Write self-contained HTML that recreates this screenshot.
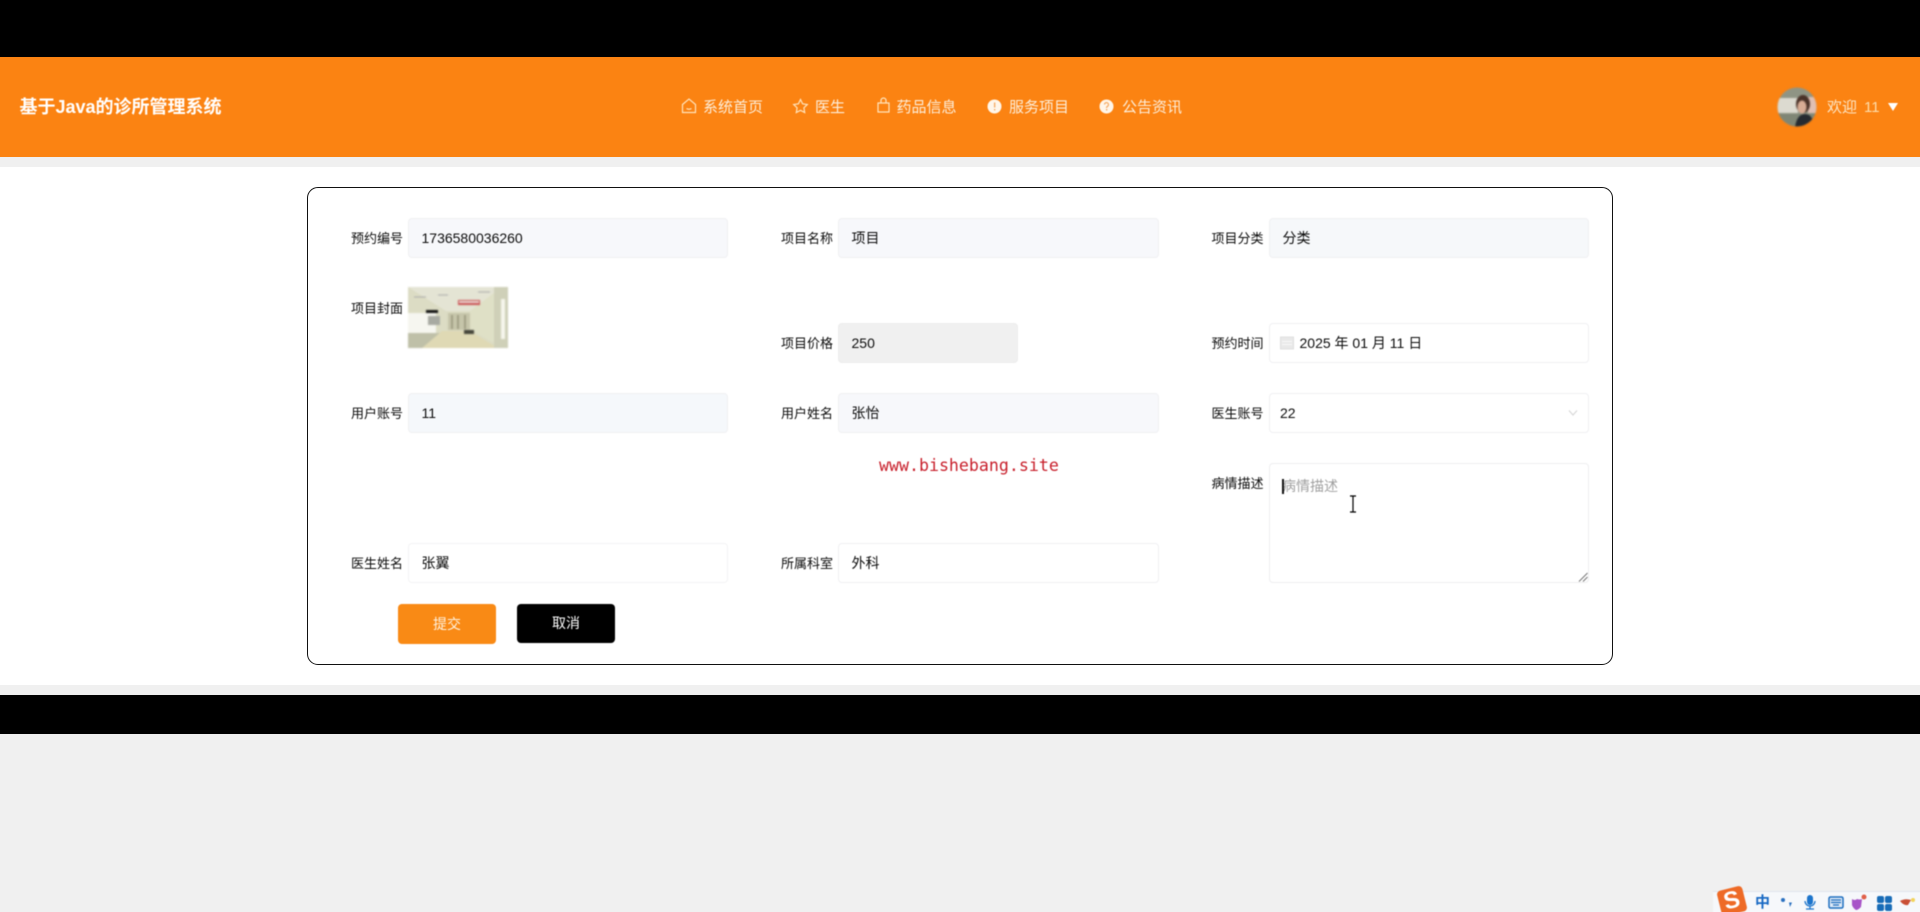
<!DOCTYPE html>
<html lang="zh"><head><meta charset="utf-8"><title>基于Java的诊所管理系统</title>
<style>
*{box-sizing:border-box}
html,body{margin:0;padding:0;width:1920px;height:912px;overflow:hidden;background:#f0f0f0}
body{position:relative;font-family:"Liberation Sans","Noto Sans CJK SC",sans-serif;color:#111}
.a{position:absolute}
#wrap{position:absolute;left:0;top:0;width:1920px;height:912px;filter:blur(.4px)}
.nav{position:absolute;top:97px;height:22px;line-height:22px;font-size:15px;color:#fdeeda;white-space:nowrap}
.lb{position:absolute;width:60px;text-align:right;font-size:13px;height:20px;line-height:20px;color:#0c0c0c;white-space:nowrap;margin-top:1px}
.in{position:absolute;width:320px;height:40px;line-height:39px;border:1px solid #f0f0f2;border-radius:4px;font-size:14px;padding-left:12.500px;color:#0c0c0c;background:#fff;white-space:nowrap}
.g{background:#f7f8fb}
</style></head><body>
<div class="a" style="left:0;top:0;width:1920px;height:57px;background:#000"></div>
<div class="a" style="left:0;top:57px;width:1920px;height:100px;background:#fb8312"></div>
<div class="a" style="left:0;top:167px;width:1920px;height:518px;background:#fff"></div>
<div class="a" style="left:0;top:695px;width:1920px;height:39px;background:#000"></div>
<div class="a" style="left:307px;top:187px;width:1306px;height:478px;border:1.500px solid #111;border-radius:11px;background:#fff"></div>
<div id="wrap">

<div class="a" style="left:19.500px;top:94px;height:26px;line-height:26px;font-size:18px;font-weight:700;color:#fff;white-space:nowrap">基于Java的诊所管理系统</div>

<svg class="a" style="left:680px;top:97px" width="18" height="18" viewBox="0 0 18 18" fill="none" stroke="#ffe4bd" stroke-width="1.200"><path d="M2.500 7.500 9 2l6.500 5.500V15.500H2.500Z"/><path d="M6.500 11.500q2.500 1.500 5 0" /></svg>
<div class="nav" style="left:703px">系统首页</div>
<svg class="a" style="left:792px;top:98px" width="17" height="16" viewBox="0 0 17 16" fill="none" stroke="#ffe4bd" stroke-width="1.200"><path d="M8.500 1.500l2.100 4.300 4.700.7-3.400 3.300.8 4.700-4.200-2.200-4.200 2.200.8-4.700L1.700 6.500l4.700-.7z"/></svg>
<div class="nav" style="left:815px">医生</div>
<svg class="a" style="left:876px;top:97px" width="15" height="17" viewBox="0 0 15 17" fill="none" stroke="#ffe4bd" stroke-width="1.200"><path d="M2 6h11v9H2z"/><path d="M5 6V3.500a2.500 2.500 0 0 1 5 0V6"/></svg>
<div class="nav" style="left:896.500px">药品信息</div>
<svg class="a" style="left:987px;top:99px" width="15" height="15" viewBox="0 0 15 15"><circle cx="7.500" cy="7.500" r="7" fill="#fff6ea"/><rect x="7" y="3.500" width="1.300" height="5" fill="#f4a860"/><rect x="7" y="10" width="1.300" height="1.500" fill="#f4a860"/></svg>
<div class="nav" style="left:1009px">服务项目</div>
<svg class="a" style="left:1099px;top:99px" width="15" height="15" viewBox="0 0 15 15"><circle cx="7.500" cy="7.500" r="7" fill="#fff6ea"/><path d="M5.500 5.500a2 2 0 1 1 3 1.800c-.7.400-1 .8-1 1.700" fill="none" stroke="#f4a860" stroke-width="1.200"/><rect x="7" y="10" width="1.300" height="1.500" fill="#f4a860"/></svg>
<div class="nav" style="left:1122px">公告资讯</div>

<svg class="a" style="left:1777px;top:87px;filter:blur(.7px)" width="40" height="40" viewBox="0 0 40 40"><defs><clipPath id="c"><circle cx="20" cy="20" r="19.500"/></clipPath></defs><g clip-path="url(#c)"><rect width="40" height="40" fill="#8f9484"/><rect x="0" y="11" width="21" height="15" fill="#dcdad0"/><rect y="27" width="40" height="13" fill="#7f8675"/><rect x="31" y="10" width="9" height="16" fill="#e0bfb2"/><ellipse cx="26" cy="17" rx="7" ry="9" fill="#4a3228"/><ellipse cx="25" cy="20" rx="4.500" ry="6.500" fill="#d8ac94"/><path d="M18 40q2-13 10-13 8 0 9 13z" fill="#252a30"/></g></svg>
<div class="nav" style="left:1827px;color:#fde6c6">欢迎</div>
<div class="nav" style="left:1864px;color:#fddcaa">11</div>
<svg class="a" style="left:1888px;top:103px" width="10" height="8" viewBox="0 0 10 8"><path d="M0 0h10L5 8z" fill="#fff"/></svg>

<div class="lb" style="left:343px;top:228px">预约编号</div>
<div class="in g" style="left:408px;top:218px">1736580036260</div>
<div class="lb" style="left:773px;top:228px">项目名称</div>
<div class="in g" style="left:838px;top:218px;width:321px">项目</div>
<div class="lb" style="left:1203.500px;top:228px">项目分类</div>
<div class="in" style="left:1269px;top:218px;background:#f6f8fa">分类</div>

<div class="lb" style="left:343px;top:298px">项目封面</div>
<svg class="a" style="left:408px;top:287px;filter:blur(.9px)" width="100" height="61" viewBox="0 0 100 61"><rect width="100" height="61" fill="#dcdcc4"/><path d="M0 0h100L62 24H38z" fill="#e4e4d4"/><path d="M0 26h28v20H0z" fill="#f6f6f0"/><path d="M0 46h34L16 61H0z" fill="#bfc0a8"/><path d="M34 44h28l28 17H14z" fill="#dfd9b4"/><path d="M62 24 86 6V56L62 42z" fill="#dfe0c6"/><path d="M86 0h14v61H86z" fill="#cfd0b8"/><rect x="93" y="12" width="4" height="40" fill="#f6f6ec"/><path d="M40 26h22v17H40z" fill="#c6c5aa"/><path d="M44 28v14M50 28v14M57 28v14" stroke="#8d8c72" stroke-width="1.300"/><rect x="50" y="13" width="22" height="5" fill="#c94e50"/><rect x="51" y="14" width="20" height="2" fill="#ead8d4"/><rect x="18" y="23" width="12" height="3" fill="#111"/><rect x="20" y="29" width="12" height="9" fill="#a8aaa2"/><rect x="56" y="43" width="10" height="4" fill="#45453a"/><path d="M6 10h12M30 8h10M70 5h12" stroke="#aaa" stroke-width="1"/></svg>
<div class="lb" style="left:773px;top:333px">项目价格</div>
<div class="in" style="left:838px;top:323px;width:180px;background:#f0f0f0;border-color:#ececec">250</div>
<div class="lb" style="left:1203.500px;top:333px">预约时间</div>
<div class="in" style="left:1269px;top:323px;padding-left:29.500px">2025 年 01 月 11 日</div>
<svg class="a" style="left:1280px;top:336px" width="14" height="14" viewBox="0 0 14 14"><rect x=".5" y="1" width="13" height="12" fill="#e9e9e9" stroke="#e0e0e0"/><rect x="2" y="5" width="10" height="1" fill="#f8f8f8"/><rect x="2" y="8" width="10" height="1" fill="#f8f8f8"/></svg>

<div class="lb" style="left:343px;top:403px">用户账号</div>
<div class="in" style="left:408px;top:393px;background:#f5f8fb">11</div>
<div class="lb" style="left:773px;top:403px">用户姓名</div>
<div class="in g" style="left:838px;top:393px;width:321px">张怡</div>
<div class="lb" style="left:1203.500px;top:403px">医生账号</div>
<div class="in" style="left:1269px;top:393px;padding-left:10px">22</div>
<svg class="a" style="left:1568px;top:409px" width="10" height="8" viewBox="0 0 10 8" fill="none" stroke="#d8d8d8" stroke-width="1.200"><path d="M1 1.500 5 6l4-4.500"/></svg>

<div class="a" style="left:879px;top:455px;height:22px;line-height:22px;font-family:'DejaVu Sans Mono','Liberation Mono',monospace;font-size:16.600px;color:#c8202c;white-space:nowrap">www.bishebang.site</div>

<div class="lb" style="left:1203.500px;top:473px">病情描述</div>
<div class="a" style="left:1269px;top:463px;width:320px;height:120px;border:1px solid #eeeef0;border-radius:4px;background:#fff"></div>
<div class="a" style="left:1282px;top:476px;height:20px;line-height:20px;font-size:14px;color:#a0a0a0;white-space:nowrap">病情描述</div>
<div class="a" style="left:1282px;top:479px;width:1.500px;height:15px;background:#111"></div>
<svg class="a" style="left:1348px;top:495px" width="10" height="18" viewBox="0 0 10 18" fill="none" stroke="#000" stroke-width="1.200"><path d="M2 1h6M5 1v16M2 17h6"/></svg>
<svg class="a" style="left:1578px;top:572px" width="10" height="10" viewBox="0 0 10 10" fill="none" stroke="#777" stroke-width="1"><path d="M1 9.500 9.500 1M5 9.500 9.500 5"/></svg>

<div class="lb" style="left:343px;top:553px">医生姓名</div>
<div class="in" style="left:408px;top:543px;border-color:#f3f3f5">张翼</div>
<div class="lb" style="left:773px;top:553px">所属科室</div>
<div class="in" style="left:838px;top:543px;width:321px">外科</div>

<div class="a" style="left:398px;top:604px;width:98px;height:40px;line-height:40px;border-radius:4px;background:#f98a15;color:#fff3e0;font-size:14px;text-align:center">提交</div>
<div class="a" style="left:517px;top:604px;width:98px;height:39px;line-height:39px;border-radius:4px;background:#000;color:#fff;font-size:14px;text-align:center">取消</div>

<div class="a" style="left:1713px;top:891px;width:220px;height:30px;background:#f6f8fb;border-top:1px solid #dfe5ee"></div>
<div class="a" style="left:1719px;top:888px;width:26px;height:26px;background:#ee6a26;border-radius:4px;transform:rotate(-14deg);color:#fff;font:700 24px/26px 'Liberation Sans',sans-serif;text-align:center">S</div>
<div class="a" style="left:1755px;top:894px;height:18px;line-height:18px;font-size:15px;font-weight:700;color:#1869c4">中</div>
<svg class="a" style="left:1780px;top:894px" width="140" height="18" viewBox="0 0 140 18"><circle cx="3" cy="6" r="2" fill="#2a70c0"/><path d="M9 8.500h3L10 13z" fill="#2a70c0"/><rect x="27" y="1" width="6" height="10" rx="3" fill="#1d75cc"/><path d="M25 7a5 5 0 0 0 10 0M30 12v3M26 15h8" fill="none" stroke="#1d75cc" stroke-width="1.300"/><rect x="49" y="3" width="14" height="11" rx="1.500" fill="#dfeaf6" stroke="#1d6ec0" stroke-width="1.500"/><path d="M51 6h10M51 8.500h10M53 11h6" stroke="#1d6ec0" stroke-width="1.300"/><path d="M72 5q3 2 5 0 3 1 5 0l-1 8q-3 3-5 3-3-2-4-5z" fill="#a855c8"/><circle cx="84" cy="3" r="2.500" fill="#e0604a"/><rect x="97" y="2" width="7" height="7" rx="2" fill="#176cb8"/><rect x="105" y="2" width="7" height="7" rx="2" fill="#176cb8"/><rect x="97" y="10" width="7" height="7" rx="2" fill="#176cb8"/><rect x="105" y="10" width="7" height="7" rx="2" fill="#176cb8"/><path d="M120 7q5-3 11-1l-3 5q-4 1-8-4z" fill="#c94f35"/><circle cx="133" cy="6" r="2" fill="#f2d35a"/></svg>
</div></body></html>
